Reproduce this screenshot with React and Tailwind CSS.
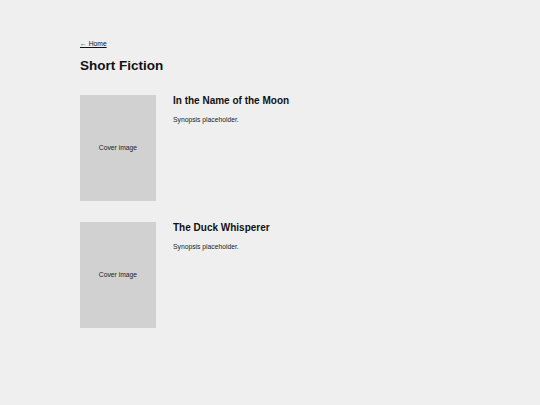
const STORIES = [
  { title: 'In the Name of the Moon', synopsis: 'Synopsis placeholder.' },
  { title: 'The Duck Whisperer', synopsis: 'Synopsis placeholder.' },
];

export default function App() {
  return (
    <div className="min-h-[405px] bg-[#efefef] pl-[80px] pt-[41px] text-[#111] font-['Liberation_Sans',Arial,sans-serif]">
      <a href="#" className="block text-[6.75px] leading-none underline text-[#111]">← Home</a>
      <h1 className="mt-[11px] text-[13.5px] leading-none font-bold">Short Fiction</h1>
      <div className="mt-[23px] flex flex-col gap-[21px]">
        {STORIES.map(s => (
          <div key={s.title} className="flex gap-[17px]">
            <div className="w-[76px] h-[106px] bg-[#d1d1d1] flex items-center justify-center text-[6.75px] text-[#222]">
              Cover image
            </div>
            <div className="pt-[1px]">
              <h2 className="text-[10px] leading-none font-bold">{s.title}</h2>
              <p className="mt-[11px] text-[6.75px] leading-none text-[#222]">{s.synopsis}</p>
            </div>
          </div>
        ))}
      </div>
    </div>
  );
}
